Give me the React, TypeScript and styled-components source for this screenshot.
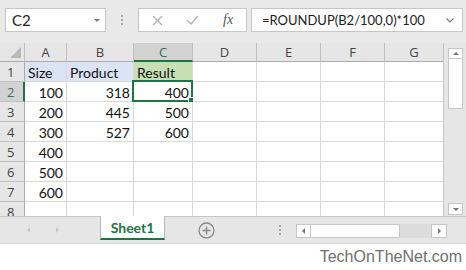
import styled, { createGlobalStyle } from "styled-components";

const GlobalStyle = createGlobalStyle`
  html, body {
    margin: 0;
    padding: 0;
    background: #ffffff;
  }
  body {
    font-family: "Open Sans", "Noto Sans", sans-serif;
  }
`;

const GREEN = "#217346";
const GRID = "#d9d9d9";
const HEAD_LINE = "#bfbfbf";

const Window = styled.div`
  width: 466px;
  height: 270px;
  display: flex;
  flex-direction: column;
  overflow: hidden;
  background: #ffffff;
`;

/* ---------- formula bar ---------- */

const FormulaRow = styled.div`
  height: 43px;
  box-sizing: border-box;
  padding: 8px 3px 0 5px;
  display: flex;
  align-items: flex-start;
  background: #e9e9e9;
`;

const InputBox = styled.div<{ $width: number }>`
  width: ${(p) => p.$width}px;
  height: 24px;
  box-sizing: border-box;
  background: #ffffff;
  border: 1px solid #c6c6c6;
  display: flex;
  align-items: center;
`;

const NameBox = styled(InputBox)`
  justify-content: space-between;
  padding: 0 5px 0 6px;
  font-family: Lato, "Open Sans", sans-serif;
  font-size: 15px;
  color: #222;
`;

const Grip = styled.div`
  width: 32px;
  height: 24px;
  display: flex;
  align-items: center;
  justify-content: center;
  &::before {
    content: "";
    width: 2px;
    height: 11px;
    background: repeating-linear-gradient(
      to bottom,
      #a8a8a8 0 2px,
      transparent 2px 4px
    );
  }
`;

const IconBox = styled(InputBox)`
  padding: 0 0 0 13px;
  gap: 23px;
  color: #b4b4b4;
`;

const Fx = styled.span`
  font-family: "Liberation Serif", serif;
  font-style: italic;
  font-size: 14px;
  color: #555;
  margin-left: 1px;
`;

const FormulaBox = styled(InputBox)`
  margin-left: 4px;
  padding: 0 8px 0 10px;
  justify-content: space-between;
  font-family: Lato, "Open Sans", sans-serif;
  font-size: 13px;
  color: #222;
`;

/* ---------- grid ---------- */

const SheetArea = styled.div`
  height: 174px;
  display: flex;
  border-bottom: 1px solid #c6c6c6;
  box-sizing: border-box;
`;

const COLS = [25, 42, 67, 59, 64, 64, 64, 59];

const Grid = styled.div`
  width: 444px;
  overflow: hidden;
  display: grid;
  grid-template-columns: ${COLS.map((c) => `${c}px`).join(" ")};
  grid-template-rows: 19px repeat(8, 20px);
  border-right: 1px solid #c6c6c6;
  box-sizing: border-box;
`;

const Corner = styled.div`
  background: #e6e6e6;
  border-right: 1px solid ${HEAD_LINE};
  border-bottom: 1px solid #ababab;
  box-sizing: border-box;
  position: relative;
  &::after {
    content: "";
    position: absolute;
    right: 3px;
    bottom: 3px;
    width: 11px;
    height: 11px;
    background: #b9b9b9;
    clip-path: polygon(100% 0, 100% 100%, 0 100%);
  }
`;

const ColHead = styled.div<{ $active?: boolean }>`
  background: ${(p) => (p.$active ? "#d2d2d2" : "#e6e6e6")};
  border-right: 1px solid ${HEAD_LINE};
  border-bottom: ${(p) => (p.$active ? `2px solid ${GREEN}` : "1px solid #ababab")};
  box-sizing: border-box;
  display: flex;
  align-items: center;
  justify-content: center;
  font-size: 13px;
  color: ${(p) => (p.$active ? "#3d6b4f" : "#444")};
`;

const RowHead = styled.div<{ $active?: boolean }>`
  background: ${(p) => (p.$active ? "#d2d2d2" : "#e6e6e6")};
  border-right: ${(p) => (p.$active ? `2px solid ${GREEN}` : "1px solid #ababab")};
  border-bottom: 1px solid ${HEAD_LINE};
  box-sizing: border-box;
  display: flex;
  align-items: center;
  padding-left: 7px;
  font-size: 13px;
  color: ${(p) => (p.$active ? "#3d6b4f" : "#444")};
`;

const Cell = styled.div<{ $fill?: string; $num?: boolean; $active?: boolean }>`
  position: relative;
  background: ${(p) => p.$fill ?? "#ffffff"};
  border-right: 1px solid ${GRID};
  border-bottom: 1px solid ${GRID};
  box-sizing: border-box;
  display: flex;
  align-items: center;
  justify-content: ${(p) => (p.$num ? "flex-end" : "flex-start")};
  padding: 1px 3px 0;
  font-family: Lato, "Open Sans", sans-serif;
  font-size: 14px;
  color: #111;
  white-space: nowrap;
  ${(p) =>
    p.$active &&
    `
    &::before {
      content: "";
      position: absolute;
      left: -2px;
      top: -2px;
      right: -1px;
      bottom: -1px;
      border: 2px solid ${GREEN};
    }
    &::after {
      content: "";
      position: absolute;
      right: -3px;
      bottom: -3px;
      width: 5px;
      height: 5px;
      background: ${GREEN};
      border: 1px solid #ffffff;
    }
  `}
`;

/* ---------- scrollbars ---------- */

const VScroll = styled.div`
  width: 22px;
  background: #e6e6e6;
  display: flex;
  flex-direction: column;
  align-items: flex-start;
  padding: 5px 0 1px 4px;
  box-sizing: border-box;
`;

const ScrollBtn = styled.div<{ $w: number; $h: number }>`
  width: ${(p) => p.$w}px;
  height: ${(p) => p.$h}px;
  background: #ffffff;
  border: 1px solid #c6c6c6;
  box-sizing: border-box;
  display: flex;
  align-items: center;
  justify-content: center;
  flex-shrink: 0;
`;

const VThumb = styled(ScrollBtn)`
  border-top: none;
`;

const VTrack = styled.div`
  flex: 1;
`;

const Arrow = styled.div<{ $dir: "up" | "down" | "left" | "right"; $color?: string }>`
  width: 0;
  height: 0;
  border: 3.5px solid transparent;
  ${(p) =>
    p.$dir === "up"
      ? `border-bottom-color: ${p.$color ?? "#777"}; border-top-width: 0;`
      : p.$dir === "down"
      ? `border-top-color: ${p.$color ?? "#777"}; border-bottom-width: 0;`
      : p.$dir === "left"
      ? `border-right-color: ${p.$color ?? "#777"}; border-left-width: 0;`
      : `border-left-color: ${p.$color ?? "#777"}; border-right-width: 0;`}
`;

/* ---------- tab bar ---------- */

const TabBar = styled.div`
  height: 27px;
  display: flex;
  align-items: flex-start;
  background: #e6e6e6;
  box-sizing: border-box;
  border-bottom: 1px solid #d6d6d6;
`;

const TabNav = styled.div`
  width: 100px;
  height: 26px;
  display: flex;
  align-items: center;
  padding-left: 27px;
  gap: 26px;
  box-sizing: border-box;
`;

const SheetTab = styled.div`
  width: 65px;
  height: 24px;
  box-sizing: border-box;
  background: #ffffff;
  border-left: 1px solid #b8b8b8;
  border-right: 1px solid #b8b8b8;
  border-bottom: 2px solid ${GREEN};
  margin-top: -1px;
  display: flex;
  align-items: center;
  justify-content: center;
  font-family: Lato, "Open Sans", sans-serif;
  font-weight: 700;
  font-size: 14px;
  color: ${GREEN};
`;

const AddArea = styled.div`
  width: 82px;
  height: 26px;
  display: flex;
  align-items: center;
  justify-content: center;
`;

const HGrip = styled(Grip)`
  width: auto;
  height: 26px;
  margin-left: 32px;
`;

const HScroll = styled.div`
  display: flex;
  margin-left: 15px;
  margin-top: 7px;
`;

const HThumb = styled.div`
  width: 89px;
  height: 14px;
  background: #ffffff;
  border: 1px solid #c6c6c6;
  border-left: none;
  box-sizing: border-box;
`;

const HTrack = styled.div`
  width: 31px;
  height: 14px;
  background: #dcdcdc;
`;

/* ---------- footer ---------- */

const Footer = styled.div`
  flex: 1;
  display: flex;
  align-items: center;
  justify-content: flex-end;
  padding-right: 4px;
  font-family: "Liberation Sans", Arial, sans-serif;
  font-size: 16px;
  color: #6f6f6f;
`;

type CellData = { v?: string; num?: boolean; fill?: string; active?: boolean };

const BLUE = "#dce3f4";
const LGREEN = "#c6e0b4";

const rows: CellData[][] = [
  [{ v: "Size", fill: BLUE }, { v: "Product", fill: BLUE }, { v: "Result", fill: LGREEN }],
  [{ v: "100", num: true }, { v: "318", num: true }, { v: "400", num: true, active: true }],
  [{ v: "200", num: true }, { v: "445", num: true }, { v: "500", num: true }],
  [{ v: "300", num: true }, { v: "527", num: true }, { v: "600", num: true }],
  [{ v: "400", num: true }],
  [{ v: "500", num: true }],
  [{ v: "600", num: true }],
  [],
];

const LETTERS = ["A", "B", "C", "D", "E", "F", "G"];

const CloseIcon = () => (
  <svg width="11" height="11" viewBox="0 0 11 11">
    <path d="M1 1 L10 10 M10 1 L1 10" stroke="#b4b4b4" strokeWidth="1.4" fill="none" />
  </svg>
);

const CheckIcon = () => (
  <svg width="13" height="10" viewBox="0 0 13 10">
    <path d="M1 5 L5 9 L12 1" stroke="#b4b4b4" strokeWidth="1.4" fill="none" />
  </svg>
);

const ChevronDown = () => (
  <svg width="8" height="5" viewBox="0 0 8 5">
    <path d="M0.5 0.5 L4 4 L7.5 0.5" stroke="#777" strokeWidth="1.2" fill="none" />
  </svg>
);

const PlusCircle = () => (
  <svg width="17" height="17" viewBox="0 0 17 17">
    <circle cx="8.5" cy="8.5" r="7.5" stroke="#8a8a8a" strokeWidth="1.3" fill="none" />
    <path d="M8.5 4.5 V12.5 M4.5 8.5 H12.5" stroke="#8a8a8a" strokeWidth="1.5" />
  </svg>
);

export default function App() {
  return (
    <Window>
      <GlobalStyle />
      <FormulaRow>
        <NameBox $width={101}>
          <span>C2</span>
          <Arrow $dir="down" $color="#7a7a7a" />
        </NameBox>
        <Grip />
        <IconBox $width={109}>
          <CloseIcon />
          <CheckIcon />
          <Fx>fx</Fx>
        </IconBox>
        <FormulaBox $width={212}>
          <span>=ROUNDUP(B2/100,0)*100</span>
          <ChevronDown />
        </FormulaBox>
      </FormulaRow>

      <SheetArea>
        <Grid>
          <Corner />
          {LETTERS.map((l) => (
            <ColHead key={l} $active={l === "C"}>
              {l}
            </ColHead>
          ))}
          {rows.flatMap((row, r) => [
            <RowHead key={`h${r}`} $active={r === 1}>
              {r + 1}
            </RowHead>,
            ...LETTERS.map((l, c) => {
              const d = row[c] ?? {};
              return (
                <Cell key={`${l}${r}`} $fill={d.fill} $num={d.num} $active={d.active}>
                  {d.v}
                </Cell>
              );
            }),
          ])}
        </Grid>
        <VScroll>
          <ScrollBtn $w={15} $h={11}>
            <Arrow $dir="up" />
          </ScrollBtn>
          <VThumb $w={15} $h={50} />
          <VTrack />
          <ScrollBtn $w={15} $h={12}>
            <Arrow $dir="down" />
          </ScrollBtn>
        </VScroll>
      </SheetArea>

      <TabBar>
        <TabNav>
          <Arrow $dir="left" $color="#c9c9c9" />
          <Arrow $dir="right" $color="#c9c9c9" />
        </TabNav>
        <SheetTab>Sheet1</SheetTab>
        <AddArea>
          <PlusCircle />
        </AddArea>
        <HGrip />
        <HScroll>
          <ScrollBtn $w={15} $h={14}>
            <Arrow $dir="left" />
          </ScrollBtn>
          <HThumb />
          <HTrack />
          <ScrollBtn $w={16} $h={14}>
            <Arrow $dir="right" />
          </ScrollBtn>
        </HScroll>
      </TabBar>

      <Footer>TechOnTheNet.com</Footer>
    </Window>
  );
}
